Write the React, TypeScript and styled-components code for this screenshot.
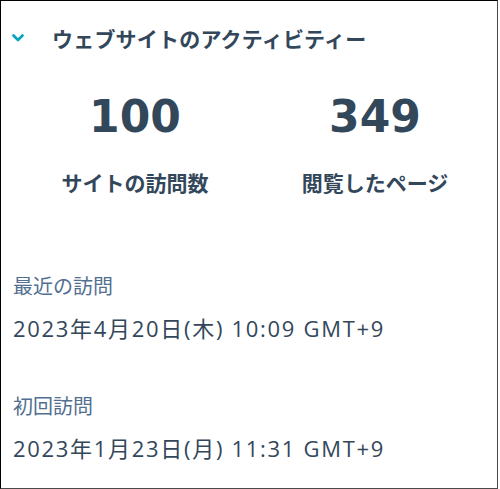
import React from "react";
import styled, { createGlobalStyle } from "styled-components";

const GlobalStyle = createGlobalStyle`
  html, body {
    margin: 0;
    padding: 0;
    background: #ffffff;
  }
  body {
    font-family: "Open Sans", "Noto Sans CJK JP", sans-serif;
    color: #33475b;
  }
`;

const Panel = styled.div`
  box-sizing: border-box;
  width: 498px;
  height: 489px;
  border-top: 1px solid #000000;
  border-left: 1px solid #000000;
  border-right: 1px solid #4a4a4a;
  border-bottom: 1px solid #4a4a4a;
  display: flex;
  flex-direction: column;
`;

const Header = styled.div`
  display: flex;
  align-items: center;
  height: 74px;
  padding-left: 11px;
  gap: 28px;
`;

const Chevron = styled.svg`
  width: 12px;
  height: 8px;
  flex-shrink: 0;
`;

const Title = styled.h2`
  margin: 0;
  font-family: "Noto Sans CJK JP", sans-serif;
  font-size: 21px;
  font-weight: 700;
  color: #33475b;
  letter-spacing: 0.2px;
`;

const Stats = styled.div`
  display: grid;
  grid-template-columns: 240px 240px;
  padding: 11px 0 0 14px;
`;

const Stat = styled.div`
  display: flex;
  flex-direction: column;
  align-items: center;
`;

const Value = styled.div`
  font-family: "DejaVu Sans", sans-serif;
  font-size: 44px;
  font-weight: 700;
  line-height: 62px;
  color: #33475b;
`;

const StatLabel = styled.div`
  margin-top: 20px;
  font-family: "Noto Sans CJK JP", sans-serif;
  font-size: 21px;
  font-weight: 700;
  line-height: 28px;
  color: #33475b;
`;

const Details = styled.div`
  display: flex;
  flex-direction: column;
  padding: 77px 12px 0;
  gap: 51px;
`;

const Detail = styled.div`
  display: flex;
  flex-direction: column;
  gap: 15px;
`;

const DetailLabel = styled.div`
  font-family: "Noto Sans CJK JP", sans-serif;
  font-size: 20px;
  line-height: 26px;
  color: #516f90;
`;

const DetailValue = styled.div`
  font-family: "Open Sans", "Noto Sans CJK JP", sans-serif;
  font-size: 22px;
  line-height: 28px;
  letter-spacing: 1.7px;
  color: #33475b;
`;

const stats = [
  { value: "100", label: "サイトの訪問数" },
  { value: "349", label: "閲覧したページ" },
];

const visits = [
  { label: "最近の訪問", value: "2023年4月20日(木) 10:09 GMT+9" },
  { label: "初回訪問", value: "2023年1月23日(月) 11:31 GMT+9" },
];

export default function App() {
  return (
    <>
      <GlobalStyle />
      <Panel>
        <Header>
          <Chevron viewBox="0 0 12 8">
            <path
              d="M1.5 1.5 L6 6 L10.5 1.5"
              fill="none"
              stroke="#00a4bd"
              strokeWidth="2.6"
              strokeLinecap="round"
              strokeLinejoin="round"
            />
          </Chevron>
          <Title>ウェブサイトのアクティビティー</Title>
        </Header>
        <Stats>
          {stats.map((s) => (
            <Stat key={s.label}>
              <Value>{s.value}</Value>
              <StatLabel>{s.label}</StatLabel>
            </Stat>
          ))}
        </Stats>
        <Details>
          {visits.map((v) => (
            <Detail key={v.label}>
              <DetailLabel>{v.label}</DetailLabel>
              <DetailValue>{v.value}</DetailValue>
            </Detail>
          ))}
        </Details>
      </Panel>
    </>
  );
}
